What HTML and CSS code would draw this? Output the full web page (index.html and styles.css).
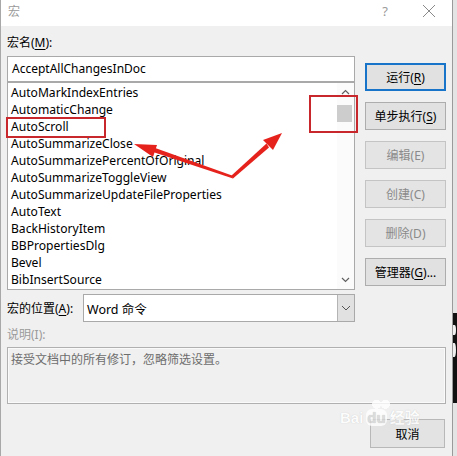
FILE: index.html
```html
<!DOCTYPE html>
<html lang="zh-CN">
<head>
<meta charset="utf-8">
<link rel="stylesheet" href="styles.css">
</head>
<body>
<div class="dialog">
  <div class="titlebar">
    <span class="title">宏</span>
    <span class="help">?</span>
    <svg class="close" width="14" height="14" viewBox="0 0 14 14"><path d="M1 1L13 13M13 1L1 13" stroke="#8a8a8a" stroke-width="1" fill="none"/></svg>
  </div>
  <div class="content">
    <div class="top">
      <div class="left">
        <div class="label">宏名(<u>M</u>):</div>
        <div class="input">AcceptAllChangesInDoc</div>
        <div class="listbox">
          <ul class="items">
            <li>AutoMarkIndexEntries</li>
            <li>AutomaticChange</li>
            <li>AutoScroll</li>
            <li>AutoSummarizeClose</li>
            <li>AutoSummarizePercentOfOriginal</li>
            <li>AutoSummarizeToggleView</li>
            <li>AutoSummarizeUpdateFileProperties</li>
            <li>AutoText</li>
            <li>BackHistoryItem</li>
            <li>BBPropertiesDlg</li>
            <li>Bevel</li>
            <li>BibInsertSource</li>
          </ul>
          <div class="scrollbar">
            <svg class="arrow" width="17" height="17" viewBox="0 0 17 17"><path d="M5 11L8.5 7.5L12 11" stroke="#606060" stroke-width="1.2" fill="none"/></svg>
            <div class="track"><div class="thumb"></div></div>
            <svg class="arrow" width="17" height="17" viewBox="0 0 17 17"><path d="M5 6L8.5 9.5L12 6" stroke="#606060" stroke-width="1.2" fill="none"/></svg>
          </div>
        </div>
        <div class="location">
          <span class="loc-label">宏的位置(<u>A</u>):</span>
          <div class="combo">
            <span class="combo-text">Word 命令</span>
            <span class="drop"><svg width="10" height="6" viewBox="0 0 10 6"><path d="M1 1L5 5L9 1" stroke="#555" stroke-width="1" fill="none"/></svg></span>
          </div>
        </div>
      </div>
      <div class="buttons">
        <div class="btn default">运行(<u>R</u>)</div>
        <div class="btn">单步执行(<u>S</u>)</div>
        <div class="btn disabled">编辑(E)</div>
        <div class="btn disabled">创建(C)</div>
        <div class="btn disabled">删除(D)</div>
        <div class="btn">管理器(<u>G</u>)...</div>
      </div>
    </div>
    <div class="desc-label">说明(I):</div>
    <div class="desc">接受文档中的所有修订，忽略筛选设置。</div>
    <div class="footer"><div class="btn cancel">取消</div></div>
  </div>
</div>

<div class="outside-mark"><span class="wave w1"></span><span class="wave w2"></span></div>

<div class="highlight hl-item"></div>
<div class="highlight hl-scroll"></div>

<svg class="arrows" width="457" height="456" viewBox="0 0 457 456">
  <polygon points="232,175.5 233,178.5 150,151 151,146.5" fill="#e6221d"/>
  <polygon points="134,144 157,145 153,157" fill="#e6221d"/>
  <polygon points="231,176 233,178.5 269,147.5 266.5,143.5" fill="#e6221d"/>
  <polygon points="282,133 273,150 263,140" fill="#e6221d"/>
</svg>

<div class="watermark">
  <span class="paw"></span>
  <span class="wm-text">Bai<span class="du">du</span>经验</span>
</div>
</body>
</html>
```
FILE: styles.css
```css
* { box-sizing: border-box; }
html, body { margin: 0; padding: 0; }
body {
  width: 457px;
  height: 456px;
  background: #e4e4e4;
  font-family: "Noto Sans", "Noto Sans CJK SC", sans-serif;
  font-size: 12px;
  color: #000;
  position: relative;
  overflow: hidden;
}
u { text-decoration: underline; text-underline-offset: 2px; }

.dialog {
  width: 453px;
  height: 456px;
  background: #f0f0f0;
  border-left: 1px solid #a8a8a8;
  border-right: 1px solid #9a9a9a;
}
.titlebar {
  height: 26px;
  background: #fff;
  display: flex;
  align-items: center;
  padding-left: 7px;
  padding-bottom: 4px;
}
.title { color: #9a9a9a; font-size: 12px; }
.help { margin-left: auto; color: #9a9a9a; font-size: 13px; margin-right: 34px; }
.close { margin-right: 16px; }

.content {
  padding: 0 6px 0 6px;
}
.top {
  display: flex;
  justify-content: space-between;
  padding-top: 7px;
}
.left { width: 348px; }
.label { height: 20px; line-height: 20px; margin-bottom: 3px; }
.input {
  height: 26px;
  background: #fff;
  border: 1px solid #a9a9a9;
  padding-left: 4px;
  line-height: 24px;
  font-size: 12px;
}
.listbox {
  height: 208px;
  background: #fff;
  border: 1px solid #a9a9a9;
  display: flex;
}
.items {
  list-style: none;
  margin: 0;
  padding: 1px 0 0 3px;
  flex: 1;
}
.items li { height: 17px; line-height: 17px; white-space: nowrap; font-size: 12.1px; }
.scrollbar {
  width: 17px;
  background: #fbfbfb;
  display: flex;
  flex-direction: column;
}
.arrow { display: block; flex: none; }
.track { flex: 1; padding-top: 5px; }
.thumb { width: 15px; height: 17px; margin-left: 0; background: #cdcdcd; }

.location {
  display: flex;
  align-items: center;
  margin-top: 4px;
}
.loc-label { width: 76px; flex: none; }
.combo {
  flex: 1;
  height: 28px;
  background: #fff;
  border: 1px solid #a9a9a9;
  display: flex;
  align-items: center;
}
.combo-text { padding-left: 3px; font-size: 12.5px; }
.drop {
  margin-left: auto;
  width: 17px;
  height: 100%;
  background: #e1e1e1;
  border-left: 1px solid #b4b4b4;
  display: flex;
  align-items: center;
  justify-content: center;
}

.buttons {
  width: 81px;
  padding-top: 30px;
  display: flex;
  flex-direction: column;
  gap: 11px;
}
.btn {
  height: 28px;
  background: #e1e1e1;
  border: 1px solid #adadad;
  display: flex;
  align-items: center;
  justify-content: center;
  font-size: 12px;
  color: #000;
}
.btn.default { border: 2px solid #1874c9; }
.btn.disabled { background: #e4e4e4; border-color: #c4c4c4; color: #8a8a8a; }

.desc-label { margin-top: 3px; height: 20px; line-height: 20px; color: #9a9a9a; }
.desc {
  margin-top: 2px;
  height: 57px;
  border: 1px solid #b0b0b0;
  box-shadow: inset 0 0 0 1px #fafafa;
  padding: 2px 0 0 3px;
  color: #6d6d6d;
  font-size: 12px;
}
.footer {
  display: flex;
  justify-content: flex-end;
  margin-top: 15px;
  padding-right: 1px;
}
.btn.cancel { width: 75px; height: 29px; background: #e3e3e3; border-color: #b8b8b8; }

.outside-mark {
  position: absolute;
  left: 453px;
  top: 313px;
  width: 4px;
  height: 90px;
  background: #111;
}
.wave {
  position: absolute;
  left: 0;
  width: 3px;
  height: 10px;
  border-radius: 0 50% 50% 0;
  background: #f0f0f0;
}
.w1 { top: 12px; }
.w2 { top: 30px; height: 14px; }

.highlight {
  position: absolute;
  border: 2px solid #c8272b;
}
.hl-item { left: 6px; top: 117px; width: 100px; height: 21px; }
.hl-scroll { left: 309px; top: 95px; width: 49px; height: 38px; }

.arrows { position: absolute; left: 0; top: 0; pointer-events: none; }

.watermark {
  position: absolute;
  left: 340px;
  top: 398px;
  width: 95px;
  height: 27px;
  pointer-events: none;
  opacity: 0.8;
}
.paw {
  position: absolute;
  left: 30px;
  top: 0;
  width: 22px;
  height: 14px;
  border-radius: 50%;
  background: radial-gradient(circle at 30% 45%, #fff 25%, transparent 27%), radial-gradient(circle at 70% 45%, #fff 25%, transparent 27%);
}
.wm-text {
  position: absolute;
  left: 0;
  top: 12px;
  font-family: "Liberation Sans", "Noto Sans CJK SC", sans-serif;
  font-weight: bold;
  font-size: 15px;
  line-height: 15px;
  color: #fff;
  text-shadow: 0 0 1px #bbb;
  white-space: nowrap;
}
.du { background: #fff; color: #d8d8d8; border-radius: 6px; padding: 0 1px; margin: 0 3px; }
```
